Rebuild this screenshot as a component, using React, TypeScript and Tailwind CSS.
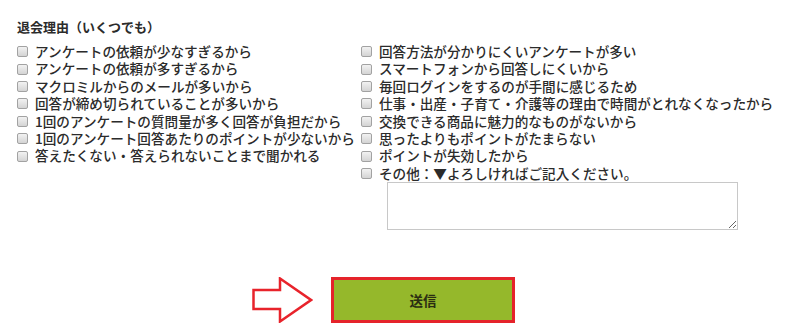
const leftReasons = [
  'アンケートの依頼が少なすぎるから',
  'アンケートの依頼が多すぎるから',
  'マクロミルからのメールが多いから',
  '回答が締め切られていることが多いから',
  '1回のアンケートの質問量が多く回答が負担だから',
  '1回のアンケート回答あたりのポイントが少ないから',
  '答えたくない・答えられないことまで聞かれる',
]

const rightReasons = [
  '回答方法が分かりにくいアンケートが多い',
  'スマートフォンから回答しにくいから',
  '毎回ログインをするのが手間に感じるため',
  '仕事・出産・子育て・介護等の理由で時間がとれなくなったから',
  '交換できる商品に魅力的なものがないから',
  '思ったよりもポイントがたまらない',
  'ポイントが失効したから',
  'その他：▼よろしければご記入ください。',
]

function Box() {
  return (
    <span className="shrink-0 w-[11px] h-[11px] mr-[7px] rounded-[2px] border border-[#a2a2a2] bg-gradient-to-b from-[#f2f2f2] to-[#d4d4d4]" />
  )
}

function Row({ label }: { label: string }) {
  return (
    <label className="flex items-center h-[17.4px] whitespace-nowrap">
      <Box />
      <span>{label}</span>
    </label>
  )
}

export default function App() {
  return (
    <div className="w-[800px] h-[334px] bg-white text-[#2b2b2b] font-['Noto_Sans_CJK_JP','Noto_Sans',sans-serif] pt-[18px] pl-[17px] overflow-hidden">
      <h2 className="text-[13px] font-bold leading-[18px] mb-[7px]">退会理由（いくつでも）</h2>
      <div className="flex text-[13.6px] leading-[17.4px] font-medium">
        <div className="w-[344px] shrink-0">
          {leftReasons.map((r) => (
            <Row key={r} label={r} />
          ))}
        </div>
        <div>
          {rightReasons.map((r) => (
            <Row key={r} label={r} />
          ))}
          <textarea className="block ml-[26px] w-[351px] h-[48px] border border-[#c8c8c8] resize-y outline-none" />
        </div>
      </div>
      <div className="flex items-center mt-[47px] ml-[235px]">
        <svg width="61" height="46" viewBox="0 0 61 46" className="mr-[18px]">
          <polygon
            points="1.5,13 28,13 28,1.5 59,23 28,44.5 28,32 1.5,32"
            fill="#fff"
            stroke="#e8232b"
            strokeWidth="2.5"
            strokeLinejoin="miter"
          />
        </svg>
        <button className="w-[184px] h-[46px] border-[3px] border-[#e5232a] bg-[#95b82b] text-[13.5px] font-bold text-[#2a2e12]">
          送信
        </button>
      </div>
    </div>
  )
}
